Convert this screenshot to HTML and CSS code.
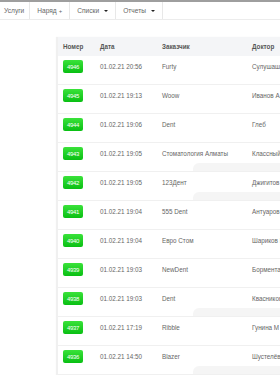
FILE: index.html
```html
<!DOCTYPE html>
<html>
<head>
<meta charset="utf-8">
<link rel="stylesheet" href="styles.css">
</head>
<body>
<nav class="nav">
  <div class="nav-item first">Услуги</div>
  <div class="nav-item">Наряд <span class="plus">+</span></div>
  <div class="nav-item">Списки <span class="caret"></span></div>
  <div class="nav-item">Отчеты <span class="caret"></span></div>
</nav>
<main class="content">
  <div class="card">
    <div class="thead">
      <div class="c1">Номер</div><div class="c2">Дата</div><div class="c3">Заказчик</div><div class="c4">Доктор</div>
    </div>
    <div class="row"><div class="cells"><div class="c1"><span class="badge">4946</span></div><div class="c2">01.02.21 20:56</div><div class="c3">Furty</div><div class="c4">Сулушаш</div></div><div class="sub"></div></div>
    <div class="row"><div class="cells"><div class="c1"><span class="badge">4945</span></div><div class="c2">01.02.21 19:13</div><div class="c3">Woow</div><div class="c4">Иванов А.А.</div></div><div class="sub"></div></div>
    <div class="row"><div class="cells"><div class="c1"><span class="badge">4944</span></div><div class="c2">01.02.21 19:06</div><div class="c3">Dent</div><div class="c4">Глеб</div></div><div class="sub"></div></div>
    <div class="row"><div class="cells"><div class="c1"><span class="badge">4943</span></div><div class="c2">01.02.21 19:05</div><div class="c3">Стоматология Алматы</div><div class="c4">Классный доктор</div></div><div class="sub on"></div></div>
    <div class="row"><div class="cells"><div class="c1"><span class="badge">4942</span></div><div class="c2">01.02.21 19:05</div><div class="c3">123Дент</div><div class="c4">Джигитов Алан</div></div><div class="sub on"></div></div>
    <div class="row"><div class="cells"><div class="c1"><span class="badge">4941</span></div><div class="c2">01.02.21 19:04</div><div class="c3">555 Dent</div><div class="c4">Антуаров Петр</div></div><div class="sub"></div></div>
    <div class="row"><div class="cells"><div class="c1"><span class="badge">4940</span></div><div class="c2">01.02.21 19:04</div><div class="c3">Евро Стом</div><div class="c4">Шариков Пётр</div></div><div class="sub"></div></div>
    <div class="row"><div class="cells"><div class="c1"><span class="badge">4939</span></div><div class="c2">01.02.21 19:03</div><div class="c3">NewDent</div><div class="c4">Борментал Иван</div></div><div class="sub"></div></div>
    <div class="row"><div class="cells"><div class="c1"><span class="badge">4938</span></div><div class="c2">01.02.21 19:03</div><div class="c3">Dent</div><div class="c4">Квасников Олег</div></div><div class="sub on"></div></div>
    <div class="row"><div class="cells"><div class="c1"><span class="badge">4937</span></div><div class="c2">01.02.21 17:19</div><div class="c3">Ribble</div><div class="c4">Гунина М</div></div><div class="sub"></div></div>
    <div class="row"><div class="cells"><div class="c1"><span class="badge">4936</span></div><div class="c2">01.02.21 14:50</div><div class="c3">Blazer</div><div class="c4">Шустелёва Анна</div></div><div class="sub on"></div></div>
  </div>
</main>
</body>
</html>
```
FILE: styles.css
```css
html, body {
  margin: 0;
  padding: 0;
  background: #ffffff;
  overflow: hidden;
  font-family: "Liberation Sans", Arial, sans-serif;
  color: #555;
}
.nav {
  display: flex;
  border-top: 2px solid #9e9e9e;
  border-bottom: 1px solid #ececec;
  height: 17px;
  font-size: 6.6px;
  color: #666;
}
.nav-item {
  display: flex;
  align-items: center;
  padding: 0 7px 0 7px;
  border-right: 1px solid #e8e8e8;
  white-space: nowrap;
}
.nav-item.first {
  padding-left: 4px;
  padding-right: 5px;
}
.plus {
  margin-left: 2px;
  font-size: 6px;
}
.caret {
  display: inline-block;
  margin-left: 5px;
  width: 0;
  height: 0;
  border-left: 2px solid transparent;
  border-right: 2px solid transparent;
  border-top: 2.5px solid #222;
}
.content {
  padding: 17px 0 0 57px;
}
.card {
  width: 400px;
  background: #fff;
  box-shadow: -1px 0 1px rgba(0,0,0,0.06);
  border-left: 1px solid #f0f0f0;
}
.thead, .cells {
  display: grid;
  grid-template-columns: 37px 62px 90px 1fr;
  padding-left: 5px;
  font-size: 6.3px;
  white-space: nowrap;
}
.thead {
  background: #f4f5f7;
  height: 19px;
  align-items: center;
  font-weight: bold;
  color: #555;
}
.row {
  padding-top: 4px;
  border-bottom: 1px solid #f0f0f0;
}
.cells {
  height: 13px;
  align-items: center;
  color: #666;
}
.sub {
  margin-top: 3px;
  height: 8px;
  margin-left: 135px;
  border-radius: 6px 0 0 0;
}
.sub.on {
  background: #f5f5f5;
}
.badge {
  display: inline-flex;
  align-items: center;
  justify-content: center;
  width: 20px;
  height: 13px;
  border-radius: 2px;
  background: linear-gradient(#3ae23a, #09bf13);
  color: #fff;
  font-size: 6px;
  letter-spacing: -0.3px;
}
```
